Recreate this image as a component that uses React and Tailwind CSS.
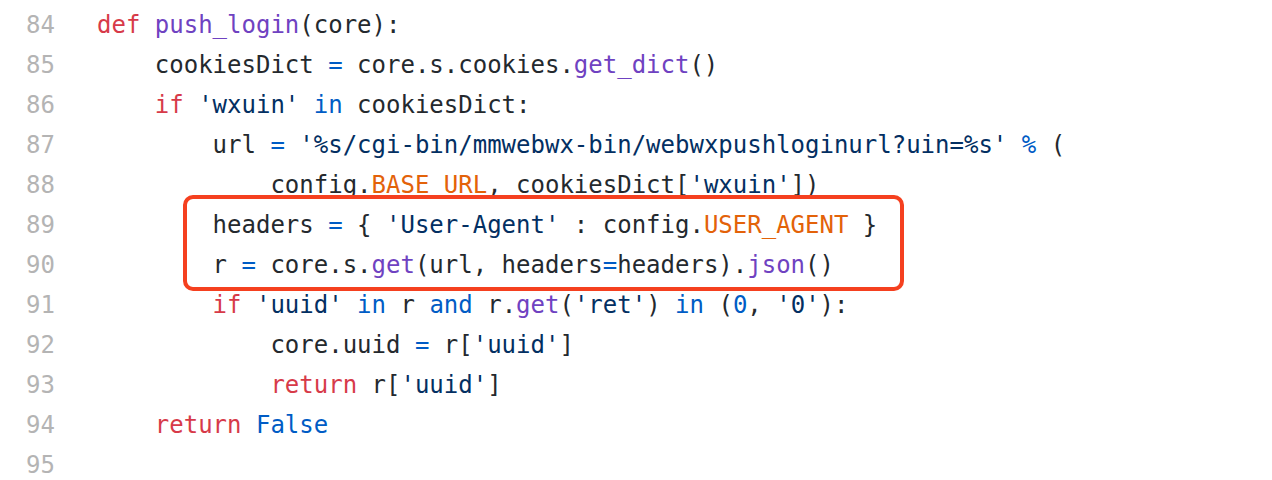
const K = 'text-[#d73a49]'
const F = 'text-[#6f42c1]'
const S = 'text-[#032f62]'
const C = 'text-[#005cc5]'
const A = 'text-[#e36209]'

// each line: [lineNumber, indent, tokens]
const lines = [
  [84, 0, [[K, 'def'], [null, ' '], [F, 'push_login'], [null, '(core):']]],
  [85, 4, [[null, 'cookiesDict '], [C, '='], [null, ' core.s.cookies.'], [F, 'get_dict'], [null, '()']]],
  [86, 4, [[K, 'if'], [null, ' '], [S, "'wxuin'"], [null, ' '], [C, 'in'], [null, ' cookiesDict:']]],
  [87, 8, [[null, 'url '], [C, '='], [null, ' '], [S, "'%s/cgi-bin/mmwebwx-bin/webwxpushloginurl?uin=%s'"], [null, ' '], [C, '%'], [null, ' (']]],
  [88, 12, [[null, 'config.'], [A, 'BASE_URL'], [null, ', cookiesDict['], [S, "'wxuin'"], [null, '])']]],
  [89, 8, [[null, 'headers '], [C, '='], [null, ' { '], [S, "'User-Agent'"], [null, ' : config.'], [A, 'USER_AGENT'], [null, ' }']]],
  [90, 8, [[null, 'r '], [C, '='], [null, ' core.s.'], [F, 'get'], [null, '(url, headers'], [C, '='], [null, 'headers).'], [F, 'json'], [null, '()']]],
  [91, 8, [[K, 'if'], [null, ' '], [S, "'uuid'"], [null, ' '], [C, 'in'], [null, ' r '], [C, 'and'], [null, ' r.'], [F, 'get'], [null, '('], [S, "'ret'"], [null, ') '], [C, 'in'], [null, ' ('], [C, '0'], [null, ', '], [S, "'0'"], [null, '):']]],
  [92, 12, [[null, 'core.uuid '], [C, '='], [null, ' r['], [S, "'uuid'"], [null, ']']]],
  [93, 12, [[K, 'return'], [null, ' r['], [S, "'uuid'"], [null, ']']]],
  [94, 4, [[K, 'return'], [null, ' '], [C, 'False']]],
  [95, 0, []],
]

export default function App() {
  return (
    <div className="relative w-[1272px] h-[480px] overflow-hidden bg-white pt-[5px] font-['DejaVu_Sans_Mono',monospace] text-[24px] text-[#24292e]">
      {lines.map(([n, indent, tokens]) => (
        <div key={n} className="flex h-[40px] items-center whitespace-pre">
          <span className="w-[55px] text-right text-[#b4b4b4]">{n}</span>
          <span className="ml-[42px]">
            {' '.repeat(indent)}
            {tokens.map(([cls, t], i) => (
              <span key={i} className={cls || undefined}>{t}</span>
            ))}
          </span>
        </div>
      ))}
      <div className="absolute left-[183px] top-[195px] w-[721px] h-[96px] rounded-[10px] border-4 border-[#f5401f]" />
    </div>
  )
}
